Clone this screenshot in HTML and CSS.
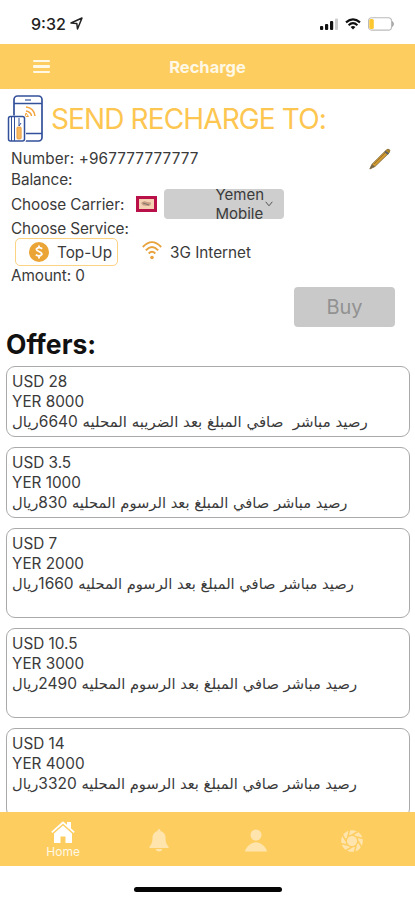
FILE: index.html
```html
<!DOCTYPE html>
<html lang="en">
<head>
    <meta charset="UTF-8">
    <meta name="viewport" content="width=device-width, initial-scale=1.0">
    <title>Recharge</title>
    <link rel="stylesheet" href="styles.css">
</head>
<body>
    <div class="screen">
        <!-- Status bar -->
        <div class="status-bar">
            <span class="time">9:32</span>
            <svg class="location" width="13" height="13" viewBox="0 0 13 13"><path d="M1 6 L12 1 L7.5 12 L6.8 6.4 Z" fill="none" stroke="#222" stroke-width="1.5" stroke-linejoin="round"/></svg>
            <svg class="signal" width="19" height="12" viewBox="0 0 19 12">
                <rect x="0" y="8" width="3.2" height="4" rx="1" fill="#111"/>
                <rect x="5" y="6" width="3.2" height="6" rx="1" fill="#111"/>
                <rect x="10" y="3" width="3.2" height="9" rx="1" fill="#111"/>
                <rect x="15" y="0.5" width="3" height="11.5" rx="1" fill="#ccc"/>
            </svg>
            <svg class="wifi" width="16" height="12" viewBox="0 0 16 12" fill="none" stroke="#111" stroke-width="2.1">
                <path d="M1 4.4 Q8 -1.8 15 4.4"/>
                <path d="M3.6 7.2 Q8 3.2 12.4 7.2"/>
                <path d="M5.6 9 Q8 7 10.4 9 L8 11.6 Z" fill="#111" stroke="none"/>
            </svg>
            <svg class="battery" width="27" height="14" viewBox="0 0 27 14">
                <rect x="0.5" y="0.7" width="23" height="12.4" rx="3.2" fill="none" stroke="#bbb" stroke-width="1.1"/>
                <rect x="1.3" y="2" width="4.5" height="10" rx="1.5" fill="#fdc72f"/>
                <path d="M24.5 4.5 Q26.5 7 24.5 9.5 Z" fill="#aaa" stroke="#aaa"/>
            </svg>
        </div>

        <header class="header">
            <div class="menu"><span></span><span></span><span></span></div>
            <h1>Recharge</h1>
        </header>

        <main class="content">
            <div class="title">
                <svg width="38" height="48" viewBox="0 0 38 48" fill="none">
                    <rect x="8" y="1" width="28" height="45" rx="3.5" stroke="#33509b" stroke-width="1.7"/>
                    <path d="M8 8.5H36M19 38.5H36" stroke="#33509b" stroke-width="1.3"/>
                    <path d="M19 5H25" stroke="#33509b" stroke-width="1.2"/>
                    <path d="M20 12 Q28 13 29 21M20 16 Q25 17 25.5 21" stroke="#f2a33c" stroke-width="1.5"/>
                    <path d="M20 18 L22.5 21.5 H19 Z" stroke="#f2a33c"/>
                    <rect x="1" y="20.5" width="19" height="27" rx="2" fill="#fff"/>
                    <rect x="2.5" y="21.5" width="16" height="24.5" rx="2" stroke="#33509b" stroke-width="1.5"/>
                    <path d="M5.5 22V46M8.5 22V46M13 23V31L15 28" stroke="#33509b"/>
                    <rect x="10.9" y="32" width="4.3" height="12" rx="1" fill="#f7b85e" stroke="#e8912f" stroke-width=".7"/>
                </svg>
                <h2>SEND RECHARGE TO:</h2>
            </div>

            <div class="row number">
                <span class="number-text">Number: +967777777777</span>
                <svg width="22" height="22" viewBox="0 0 22 22">
                    <path d="M0.8 21 L3 16.2 L17 2.3 Q19 0 21 2.2 L20 5 L6 18.5 Z" fill="#d19a31" stroke="#7b6640" stroke-width=".8"/>
                    <path d="M3 16.2 L6 18.5 L0.8 21 Z" fill="#786749"/>
                    <path d="M5 16 L17 4" stroke="#795f28" stroke-width=".6"/>
                    <path d="M16 3.5 L19.5 6" stroke="#596268" stroke-width="2"/>
                    <path d="M18 2 L20.5 4" stroke="#a68126" stroke-width="2"/>
                </svg>
            </div>
            <div class="row balance">Balance:</div>
            <div class="row carrier">
                <span class="carrier-label">Choose Carrier:</span>
                <svg class="flag" width="21" height="16" viewBox="0 0 21 16">
                    <rect width="21" height="16" fill="#b9104a"/>
                    <rect x="3" y="3" width="15" height="10" fill="#f5d1b4"/>
                    <path d="M5 7 Q8 4 11 6 L15 6.5 Q15 10 12 10 L7 9.5Z" fill="#c79d83"/>
                    <path d="M7 7 L13 9" stroke="#83776d"/>
                </svg>
                <div class="select">
                    <span>Yemen<br>Mobile</span>
                    <svg width="8" height="6" viewBox="0 0 8 6"><path d="M0.7 0.8 L4 4.8 L7.3 0.8" fill="none" stroke="#555"/></svg>
                </div>
            </div>
            <div class="row service-label">Choose Service:</div>
            <div class="services">
                <div class="service active">
                    <svg width="20" height="20" viewBox="0 0 20 20">
                        <circle cx="10" cy="10" r="10" fill="#eba536"/>
                        <path d="M13.2 6.8 Q10 4.5 7.5 6.8 C6.5 10 13.5 9 12.8 12.5 Q10.5 15.3 6.8 12.8 M10 3.5V5.5M10 14V16.5" fill="none" stroke="#fff" stroke-width="1.8"/>
                    </svg>
                    <span>Top-Up</span>
                </div>
                <div class="service">
                    <svg class="service-wifi" width="20" height="19" viewBox="0 0 20 19" fill="none" stroke="#e8a23c" stroke-width="1.9">
                        <path d="M0.8 6 Q10 -3.7 19.2 6M3.8 9.3 Q10 2.7 16.2 9.3M6.7 12.5 Q10 9 13.3 12.5"/>
                        <circle cx="10" cy="16.5" r="1.8" fill="#e8a23c" stroke="none"/>
                    </svg>
                    <span>3G Internet</span>
                </div>
            </div>
            <div class="row amount">Amount: 0</div>
            <div class="buy-row"><button class="buy">Buy</button></div>

            <h3 class="offers-title">Offers:</h3>
            <div class="offers">
                <div class="offer">
                    <p>USD 28</p>
                    <p>YER 8000</p>
                    <p class="arabic wide" dir="rtl">رصيد مباشر&nbsp; صافي المبلغ بعد الضريبه المحليه <span>6640</span>ريال</p>
                </div>
                <div class="offer">
                    <p>USD 3.5</p>
                    <p>YER 1000</p>
                    <p class="arabic" dir="rtl">رصيد مباشر صافي المبلغ بعد الرسوم المحليه <span>830</span>ريال</p>
                </div>
                <div class="offer tall">
                    <p>USD 7</p>
                    <p>YER 2000</p>
                    <p class="arabic" dir="rtl">رصيد مباشر صافي المبلغ بعد الرسوم المحليه <span>1660</span>ريال</p>
                </div>
                <div class="offer tall">
                    <p>USD 10.5</p>
                    <p>YER 3000</p>
                    <p class="arabic" dir="rtl">رصيد مباشر صافي المبلغ بعد الرسوم المحليه <span>2490</span>ريال</p>
                </div>
                <div class="offer tall">
                    <p>USD 14</p>
                    <p>YER 4000</p>
                    <p class="arabic" dir="rtl">رصيد مباشر صافي المبلغ بعد الرسوم المحليه <span>3320</span>ريال</p>
                </div>
            </div>
        </main>

        <!-- Bottom tabs -->
        <nav class="tabs">
            <div class="tab home">
                <svg width="24" height="23" viewBox="0 0 24 23">
                    <path d="M3 12.5 L12 4.5 L21 12.5 V22 H14.5 V15.5 H9.5 V22 H3 Z" fill="#fff"/>
                    <path d="M0.8 11.3 L12 1.5 L23.2 11.3" fill="none" stroke="#fff" stroke-width="1.7"/>
                    <path d="M16 1H20V8L16 4.5Z" fill="#fff"/>
                </svg>
                <span>Home</span>
            </div>
            <div class="tab">
                <svg width="20" height="23" viewBox="0 0 20 23" fill="#ffe5ad"><path d="M10 0 Q11.5 0 11.5 2 Q16.5 3.5 16.5 9 Q16.5 15 19.5 17.5 V19 H0.5 V17.5 Q3.5 15 3.5 9 Q3.5 3.5 8.5 2 Q8.5 0 10 0ZM6.5 20H13.5Q12.5 22.5 10 22.5Q7.5 22.5 6.5 20Z"/></svg>
            </div>
            <div class="tab">
                <svg width="22" height="23" viewBox="0 0 22 23" fill="#ffe5ad"><circle cx="11" cy="6" r="5.5"/><path d="M0 22.5 Q1 17 7.5 14 Q11 12.5 14.5 14 Q21 17 22 22.5Z"/></svg>
            </div>
            <div class="tab">
                <svg width="22" height="22" viewBox="0 0 22 22">
                    <circle cx="11" cy="11" r="8.6" fill="none" stroke="#ffe5ad" stroke-width="4.4"/>
                    <path d="M11 5L17 1.5M15.2 6.8L22 8.5M17 11L20.5 17M15.2 15.2L13.5 22M11 17L5 20.5M6.8 15.2L0 13.5M5 11L1.5 5M6.8 6.8L8.5 0" stroke="#fdcd60" stroke-width="1.5"/>
                    <circle cx="11" cy="11" r="5.2" fill="#ffe5ad"/>
                    <circle cx="11" cy="11" r="5.7" fill="none" stroke="#fdcd60"/>
                </svg>
            </div>
        </nav>
        <div class="home-indicator"><span></span></div>
    </div>
</body>
</html>
```
FILE: styles.css
```css
* {
    box-sizing: border-box;
}
body {
    margin: 0;
    background-color: #fff;
    color: #3a3a3a;
    font-family: Inter, "DejaVu Sans", sans-serif;
    font-size: 15.3px;
    overflow: hidden;
}
h1, h2, h3, p {
    margin: 0;
}
svg {
    display: block;
    flex-shrink: 0;
}
.screen {
    display: flex;
    flex-direction: column;
    height: 900px;
    overflow: hidden;
}
.status-bar {
    display: flex;
    align-items: center;
    flex-shrink: 0;
    height: 44px;
    padding: 3px 20px 0 31px;
}
.time {
    width: 39px;
    font-size: 16px;
    font-weight: 500;
    color: #222;
}
.signal {
    margin-left: auto;
}
.wifi {
    margin-left: 6px;
}
.battery {
    margin-left: 7px;
}

/* Header */
.header {
    display: grid;
    grid-template-columns: 50px 1fr 50px;
    align-items: center;
    flex-shrink: 0;
    height: 45px;
    background-color: #fdcd60;
}
.menu {
    display: grid;
    gap: 3px;
    width: 17px;
    margin-left: 33px;
}
.menu span {
    height: 2.5px;
    background-color: #fff8e5;
    border-radius: 1px;
}
.header h1 {
    font-size: 16.5px;
    font-weight: 700;
    text-align: center;
    color: #fff8e5;
}

/* Recharge form */
.content {
    flex: 1;
    min-height: 0;
    overflow: hidden;
    padding: 6px 5px 0 6px;
}
.title {
    display: flex;
    align-items: center;
    gap: 7px;
    height: 48px;
}
.title h2 {
    font-size: 28px;
    font-weight: 400;
    letter-spacing: -0.87px;
    white-space: nowrap;
    color: #fdc650;
}
.row {
    display: flex;
    align-items: center;
    height: 20px;
    padding-left: 5px;
    letter-spacing: -0.08px;
}
.number {
    justify-content: space-between;
    height: 31px;
    padding-right: 19px;
}
.number-text {
    letter-spacing: 0.12px;
}
.balance {
    margin-top: -5px;
}
.carrier {
    height: 30px;
}
.carrier-label {
    width: 125px;
}
.select {
    display: flex;
    justify-content: flex-end;
    align-items: center;
    gap: 1px;
    width: 120px;
    height: 30px;
    margin-left: 7px;
    padding-right: 11px;
    border-radius: 4px;
    background-color: #cecece;
    font-size: 15px;
    letter-spacing: 0;
    line-height: 19px;
}
.service-label {
    margin-top: -1px;
}
.services {
    display: flex;
    gap: 24px;
    height: 28px;
    padding-left: 9px;
}
.service {
    display: flex;
    align-items: center;
    gap: 8px;
}
.service.active {
    width: 103px;
    padding-left: 13px;
    border: 1px solid #fcd283;
    border-radius: 5px;
}
.service-wifi {
    margin-bottom: 3px;
}
.amount {
    margin-top: -1px;
}
.buy-row {
    display: flex;
    justify-content: flex-end;
    padding: 2px 15px 0 0;
}
.buy {
    width: 101px;
    height: 40px;
    padding: 0;
    border: 0;
    border-radius: 4px;
    background-color: #c9c9c9;
    color: #929292;
    font-family: inherit;
    font-size: 20px;
}

/* Offers list */
.offers-title {
    height: 39px;
    line-height: 35px;
    font-size: 26.5px;
    font-weight: 700;
    color: #111;
}
.offers {
    display: grid;
    gap: 10px;
}
.offer {
    height: 71px;
    padding: 5px;
    border: 1px solid #aaa;
    border-radius: 9px;
    line-height: 19.5px;
}
.offer.tall {
    height: 90px;
}
.arabic {
    padding-top: 1px;
    font-family: "DejaVu Sans", sans-serif;
    font-size: 14.7px;
    text-align: left;
    white-space: nowrap;
}
.arabic.wide {
    font-size: 14.95px;
}
.arabic span {
    font-family: Inter, sans-serif;
    font-size: 15.5px;
}

/* Tabs */
.tabs {
    display: grid;
    grid-template-columns: repeat(4, 1fr);
    flex-shrink: 0;
    height: 54px;
    padding: 0 15px;
    background-color: #fdcd60;
}
.tab {
    display: flex;
    flex-direction: column;
    align-items: center;
    justify-content: center;
    padding-top: 3px;
}
.tab.home {
    padding-top: 0;
    color: #fff8e5;
    font-size: 12px;
    line-height: 15px;
}
.tab.home svg {
    margin-top: 2px;
}
.home-indicator {
    display: flex;
    justify-content: center;
    height: 34px;
    flex-shrink: 0;
    padding-top: 21px;
}
.home-indicator span {
    width: 148px;
    height: 5px;
    border-radius: 3px;
    background-color: #050505;
}
```
